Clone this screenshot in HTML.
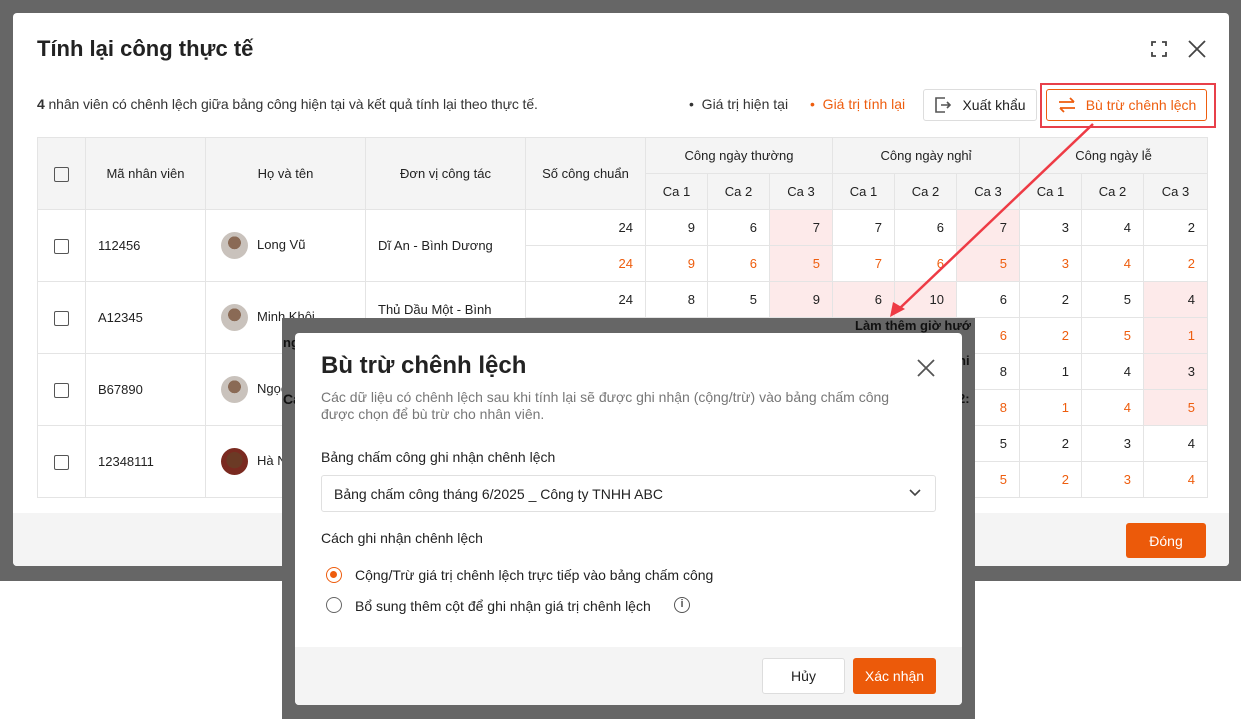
<!DOCTYPE html>
<html><head><meta charset="utf-8"><style>
*{box-sizing:border-box;margin:0;padding:0}
body{width:1241px;height:719px;position:relative;overflow:hidden;background:#fff;font-family:"Liberation Sans",Arial,sans-serif;color:#222}
.abs{position:absolute}
.bg{left:0;top:0;width:1241px;height:581px;background:#666}
.dlg{left:13px;top:13px;width:1216px;height:553px;background:#fff;border-radius:4px;overflow:hidden}
.foot{left:0;top:500px;width:1216px;height:53px;background:#f4f4f4}
table{border-collapse:collapse;table-layout:fixed;position:absolute;left:37px;top:137px;width:1170px;font-size:13px}
td,th{border:1px solid #e4e4e4;height:36px;padding:0 12px}
th{background:#f4f4f4;font-weight:normal;color:#222;text-align:center;font-size:13px}
td.n{text-align:right}
td.o{color:#ee5d0e}
td.p{background:#fdeaea}
td.c{text-align:center;padding:0}
.cb{display:inline-block;width:15px;height:15px;border:1.5px solid #555;border-radius:2px;vertical-align:middle}
.av{display:inline-block;width:27px;height:27px;border-radius:50%;background:radial-gradient(circle at 50% 40%,#8a6a55 0 30%,#c9c2bc 31% 100%);vertical-align:middle;margin-right:9px}
.btn{border-radius:3px;font-size:14px;display:flex;align-items:center;justify-content:center}
</style></head><body>
<div class="abs bg"></div>
<div class="abs dlg"><div class="abs foot"></div></div>
<div class="abs" style="left:37px;top:36px;font-size:22px;font-weight:bold;color:#222">Tính lại công thực tế</div>
<svg class="abs" style="left:1151px;top:41px" width="16" height="16" fill="none" stroke="#444" stroke-width="1.8"><path d="M1 5V1h4M11 1h4v4M15 11v4h-4M5 15H1v-4"/></svg>
<svg class="abs" style="left:1188px;top:40px" width="18" height="18" stroke="#444" stroke-width="1.8"><path d="M1 1L17 17M17 1L1 17"/></svg>
<div class="abs" style="left:37px;top:96px;font-size:14px;color:#333;letter-spacing:-0.1px"><b>4</b> nhân viên có chênh lệch giữa bảng công hiện tại và kết quả tính lại theo thực tế.</div>
<div class="abs" style="left:689px;top:96px;font-size:14px;color:#333">• &nbsp;Giá trị hiện tại</div>
<div class="abs" style="left:810px;top:96px;font-size:14px;color:#ee5d0e">• &nbsp;Giá trị tính lại</div>
<div class="abs btn" style="left:923px;top:89px;width:114px;height:32px;border:1px solid #ddd;color:#222"><svg width="18" height="18" fill="none" stroke="#555" stroke-width="1.6" style="margin-right:10px"><path d="M11 2H2v14h9M7 9h9M13 6l3 3-3 3"/></svg>Xuất khẩu</div>
<div class="abs" style="left:1040px;top:83px;width:176px;height:45px;border:2.5px solid #e8404a"></div>
<div class="abs btn" style="left:1046px;top:89px;width:161px;height:32px;border:1px solid #ee5d0e;color:#ee5d0e"><svg width="20" height="18" fill="none" stroke="#ee5d0e" stroke-width="1.8" style="margin-right:9px"><path d="M2 6h15M13 2l4 4M18 12H3M7 16l-4-4"/></svg>Bù trừ chênh lệch</div>
<table>
<colgroup><col style="width:48px"><col style="width:120px"><col style="width:160px"><col style="width:160px"><col style="width:120px"><col style="width:62px"><col style="width:62px"><col style="width:63px"><col style="width:62px"><col style="width:62px"><col style="width:63px"><col style="width:62px"><col style="width:62px"><col style="width:64px"></colgroup>
<tr><th rowspan="2" style="padding:0"><span class="cb"></span></th><th rowspan="2">Mã nhân viên</th><th rowspan="2">Họ và tên</th><th rowspan="2">Đơn vị công tác</th><th rowspan="2">Số công chuẩn</th><th colspan="3" style="height:35px">Công ngày thường</th><th colspan="3">Công ngày nghỉ</th><th colspan="3">Công ngày lễ</th></tr>
<tr><th>Ca 1</th><th>Ca 2</th><th>Ca 3</th><th>Ca 1</th><th>Ca 2</th><th>Ca 3</th><th>Ca 1</th><th>Ca 2</th><th>Ca 3</th></tr>
<tr><td class="c" rowspan="2"><span class="cb"></span></td><td rowspan="2">112456</td><td rowspan="2" style="padding-left:15px"><span class="av"></span>Long Vũ</td><td rowspan="2">Dĩ An - Bình Dương</td><td class="n">24</td><td class="n">9</td><td class="n">6</td><td class="n p">7</td><td class="n">7</td><td class="n">6</td><td class="n p">7</td><td class="n">3</td><td class="n">4</td><td class="n">2</td></tr>
<tr><td class="n o">24</td><td class="n o">9</td><td class="n o">6</td><td class="n o p">5</td><td class="n o">7</td><td class="n o">6</td><td class="n o p">5</td><td class="n o">3</td><td class="n o">4</td><td class="n o">2</td></tr>
<tr><td class="c" rowspan="2"><span class="cb"></span></td><td rowspan="2">A12345</td><td rowspan="2" style="padding-left:15px"><span class="av"></span>Minh Khôi</td><td rowspan="2" style="vertical-align:top;padding-top:20px">Thủ Dầu Một - Bình</td><td class="n">24</td><td class="n">8</td><td class="n">5</td><td class="n p">9</td><td class="n p">6</td><td class="n p">10</td><td class="n">6</td><td class="n">2</td><td class="n">5</td><td class="n p">4</td></tr>
<tr><td class="n o">24</td><td class="n o">8</td><td class="n o">5</td><td class="n o p">9</td><td class="n o p">6</td><td class="n o p">6</td><td class="n o">6</td><td class="n o">2</td><td class="n o">5</td><td class="n o p">1</td></tr>
<tr><td class="c" rowspan="2"><span class="cb"></span></td><td rowspan="2">B67890</td><td rowspan="2" style="padding-left:15px"><span class="av"></span>Ngọc</td><td rowspan="2"></td><td class="n">24</td><td class="n"></td><td class="n"></td><td class="n"></td><td class="n"></td><td class="n"></td><td class="n">8</td><td class="n">1</td><td class="n">4</td><td class="n p">3</td></tr>
<tr><td class="n o"></td><td></td><td></td><td></td><td></td><td></td><td class="n o">8</td><td class="n o">1</td><td class="n o">4</td><td class="n o p">5</td></tr>
<tr><td class="c" rowspan="2"><span class="cb"></span></td><td rowspan="2">12348111</td><td rowspan="2" style="padding-left:15px"><span class="av" style="background:radial-gradient(circle at 50% 45%,#6b3a25 0 40%,#7a2a20 41% 100%)"></span>Hà N</td><td rowspan="2"></td><td></td><td></td><td></td><td></td><td></td><td></td><td class="n">5</td><td class="n">2</td><td class="n">3</td><td class="n">4</td></tr>
<tr><td></td><td></td><td></td><td></td><td></td><td></td><td class="n o">5</td><td class="n o">2</td><td class="n o">3</td><td class="n o">4</td></tr>
</table>
<div class="abs btn" style="left:1126px;top:523px;width:80px;height:35px;background:#ec5a0a;color:#fff">Đóng</div>
<svg class="abs" style="left:0;top:0" width="1241" height="719"><line x1="1093" y1="124" x2="900" y2="308" stroke="#ee3b45" stroke-width="2.5"/><path d="M890 317L893 302L905 309Z" fill="#ee3b45"/></svg>
<div class="abs" style="left:282px;top:318px;width:693px;height:401px;background:#666">
<div class="abs" style="left:573px;top:0;font-size:13px;font-weight:bold;color:#111">Làm thêm giờ hướ</div>
<div class="abs" style="left:1px;top:17px;font-size:13px;font-weight:bold;color:#111">ng</div>
<div class="abs" style="left:1px;top:73px;font-size:14px;font-weight:bold;color:#111">Ca</div>
<div class="abs" style="left:676px;top:35px;font-size:13px;font-weight:bold;color:#111">hi</div>
<div class="abs" style="left:676px;top:73px;font-size:13px;font-weight:bold;color:#111">2:</div>
</div>
<div class="abs" style="left:295px;top:333px;width:667px;height:372px;background:#fff;border-radius:4px;overflow:hidden">
<div class="abs" style="left:0;top:314px;width:667px;height:58px;background:#f4f4f4"></div>
</div>
<div class="abs" style="left:321px;top:352px;font-size:24px;font-weight:bold;color:#222">Bù trừ chênh lệch</div>
<svg class="abs" style="left:917px;top:359px" width="18" height="18" stroke="#555" stroke-width="1.8"><path d="M1 1L17 17M17 1L1 17"/></svg>
<div class="abs" style="left:321px;top:389px;width:600px;font-size:14px;line-height:17px;color:#777">Các dữ liệu có chênh lệch sau khi tính lại sẽ được ghi nhận (cộng/trừ) vào bảng chấm công được chọn để bù trừ cho nhân viên.</div>
<div class="abs" style="left:321px;top:449px;font-size:14px;color:#222">Bảng chấm công ghi nhận chênh lệch</div>
<div class="abs" style="left:321px;top:475px;width:615px;height:37px;border:1px solid #e0e0e0;border-radius:3px;font-size:14px;padding:10px 12px;color:#222">Bảng chấm công tháng 6/2025 _ Công ty TNHH ABC</div>
<svg class="abs" style="left:909px;top:489px" width="12" height="8" fill="none" stroke="#444" stroke-width="1.6"><path d="M1 1l5 5 5-5"/></svg>
<div class="abs" style="left:321px;top:530px;font-size:14px;color:#222">Cách ghi nhận chênh lệch</div>
<div class="abs" style="left:326px;top:567px;width:16px;height:16px;border:1.5px solid #ee5d0e;border-radius:50%"><div style="margin:3px;width:7px;height:7px;border-radius:50%;background:#ee5d0e"></div></div>
<div class="abs" style="left:355px;top:567px;font-size:14px;color:#222">Cộng/Trừ giá trị chênh lệch trực tiếp vào bảng chấm công</div>
<div class="abs" style="left:326px;top:597px;width:16px;height:16px;border:1.5px solid #666;border-radius:50%"></div>
<div class="abs" style="left:355px;top:598px;font-size:14px;color:#222">Bổ sung thêm cột để ghi nhận giá trị chênh lệch</div>
<div class="abs" style="left:674px;top:597px;width:16px;height:16px;border:1.5px solid #555;border-radius:50%;font-size:11px;text-align:center;line-height:13px;color:#555;font-weight:bold">i</div>
<div class="abs btn" style="left:762px;top:658px;width:83px;height:36px;border:1px solid #ddd;background:#fff;color:#222">Hủy</div>
<div class="abs btn" style="left:853px;top:658px;width:83px;height:36px;background:#ec5a0a;color:#fff">Xác nhận</div>
</body></html>
